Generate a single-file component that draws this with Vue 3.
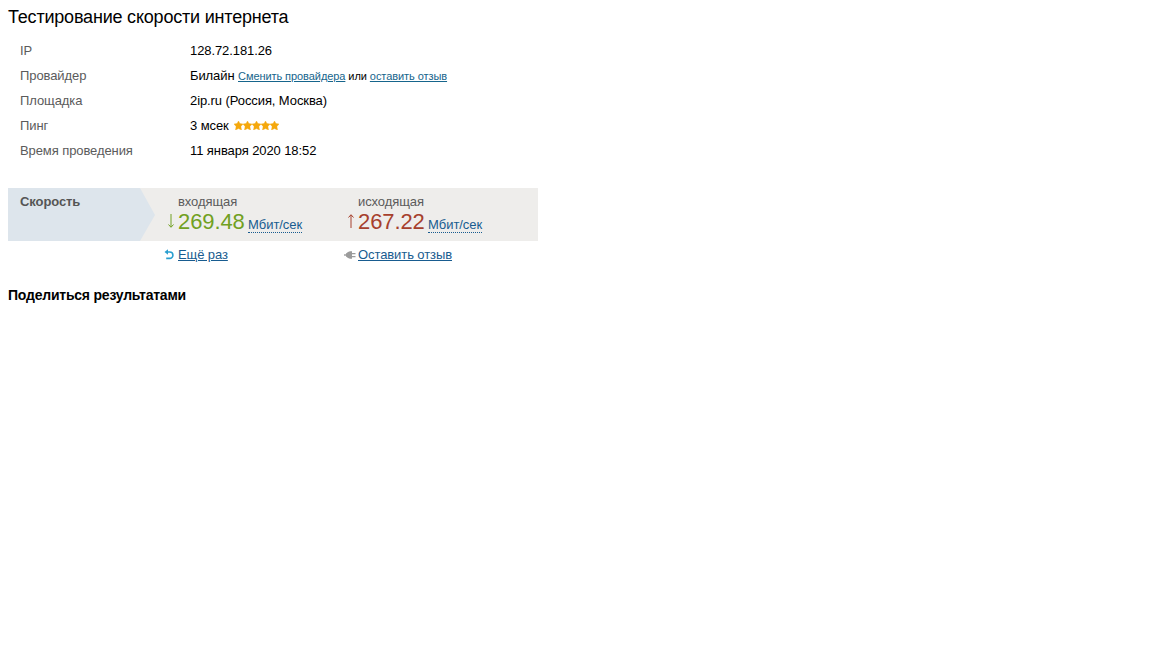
<template>
  <div class="speedtest">
    <h1 class="title">Тестирование скорости интернета</h1>

    <!-- Параметры теста -->
    <dl class="info">
      <div v-for="row in rows" :key="row.label" class="info-row">
        <dt>{{ row.label }}</dt>
        <dd>
          <span>{{ row.value }}</span>
          <small v-if="row.provider" class="provider-links">
            <a href="#">Сменить провайдера</a> или <a href="#">оставить отзыв</a>
          </small>
          <span v-if="row.stars" class="stars">
            <svg v-for="n in row.stars" :key="n" width="9" height="9" viewBox="0 0 9 9">
              <path d="M4.5 0L5.9 2.6L9 3L6.9 5.4L7.5 9L4.5 7.6L1.5 9L2.1 5.4L0 3L3.1 2.6Z" fill="#f5a80c" stroke="#f5a80c" stroke-width=".4" />
            </svg>
          </span>
        </dd>
      </div>
    </dl>

    <!-- Скорость -->
    <section class="speed">
      <div class="speed-label">Скорость</div>
      <div v-for="s in speeds" :key="s.name" class="speed-item" :class="s.type">
        <div class="speed-name">{{ s.name }}</div>
        <div class="speed-value">
          <svg class="arrow" width="9" height="16" viewBox="0 0 9 16" fill="none" stroke="currentColor">
            <path :d="s.arrow" />
          </svg>
          <span class="num">{{ s.value }}</span>
          <a class="unit">Мбит/сек</a>
        </div>
      </div>
    </section>

    <!-- Действия -->
    <div class="actions">
      <div class="action">
        <svg width="12" height="11" viewBox="0 0 12 11" fill="none">
          <path d="M2.5 3H5.7A3.2 3.2 0 0 1 5.7 9.4H2.2" stroke="#2a9fd0" stroke-width="1.6" />
          <path d="M.5 3L4 .2V5.8Z" fill="#2a9fd0" />
        </svg>
        <a href="#">Ещё раз</a>
      </div>
      <div class="action">
        <svg width="12" height="8" viewBox="0 0 12 8" fill="#9b9b9b">
          <path d="M0 3.3H2.5V4.7H0Z" />
          <path d="M2 2.6L4 1L6 .3H8V2H11.5V3.2H8V5H11.5V6.2H8V7.7H6L4 7L2 5.4Z" />
        </svg>
        <a href="#">Оставить отзыв</a>
      </div>
    </div>

    <h2 class="share">Поделиться результатами</h2>
  </div>
</template>

<script setup>
const rows = [
  { label: 'IP', value: '128.72.181.26' },
  { label: 'Провайдер', value: 'Билайн', provider: true },
  { label: 'Площадка', value: '2ip.ru (Россия, Москва)' },
  { label: 'Пинг', value: '3 мсек', stars: 5 },
  { label: 'Время проведения', value: '11 января 2020 18:52' }
]

const speeds = [
  { type: 'in', name: 'входящая', value: '269.48', arrow: 'M5 1V14M2.5 11.5L5 14.3L7.5 11.5' },
  { type: 'out', name: 'исходящая', value: '267.22', arrow: 'M5 15V2M2.5 4.5L5 1.7L7.5 4.5' }
]
</script>

<style>
body { background: #fff; }
</style>

<style scoped>
.speedtest {
  width: 530px;
  padding: 7px 8px 0;
  font-family: "Liberation Sans", Arial, sans-serif;
  font-size: 13px;
  line-height: 15px;
  letter-spacing: -.09px;
  color: #000;
}
.title {
  margin: 0;
  font-size: 18px;
  line-height: 20px;
  font-weight: 400;
  letter-spacing: -.2px;
}
a { color: #185c90; }

/* Параметры */
.info { margin: 11px 0 0; }
.info-row {
  display: flex;
  height: 25px;
  line-height: 25px;
}
dt {
  box-sizing: border-box;
  width: 182px;
  padding-left: 12px;
  color: #5b5b5b;
}
dd { margin: 0; white-space: nowrap; }
.provider-links { margin-left: 3.5px; font-size: 11px; letter-spacing: -.07px; }
.provider-links a { color: #16658c; }
.stars { display: inline-flex; margin-left: 5px; }

/* Скорость */
.speed {
  display: flex;
  height: 53px;
  margin-top: 25px;
  background: #eeedeb;
}
.speed-label {
  box-sizing: border-box;
  width: 147px;
  padding: 6px 12px;
  background: #dde5ec;
  clip-path: polygon(0 0, 132px 0, 100% 27px, 132px 100%, 0 100%);
  font-weight: 700;
  color: #555;
}
.speed-item {
  width: 169px;
  padding: 6px 0 0 11px;
}
.speed-item + .speed-item { width: 180px; }
.speed-name { padding-left: 12px; color: #5b5b5b; }
.speed-value {
  display: flex;
  align-items: baseline;
  height: 26px;
  line-height: 25px;
}
.arrow { align-self: flex-start; width: 9px; margin: 4px 3px 0 0; }
.num { font-size: 22px; letter-spacing: -.1px; }
.unit {
  margin-left: 3.4px;
  line-height: 15px;
  letter-spacing: -.07px;
  border-bottom: 1px dotted #185c90;
}
.in .speed-value { color: #71a022; }
.out .speed-value { color: #a6402d; }
.speed-value .unit { color: #185c90; }

/* Действия */
.actions { display: flex; padding: 6px 0 0 156px; }
.action { display: flex; align-items: center; width: 180px; }
.action svg { width: 12px; margin-right: 2px; }

.share {
  margin: 25px 0 0;
  font-size: 14px;
  line-height: 16px;
  font-weight: 700;
  letter-spacing: -.22px;
}
</style>
